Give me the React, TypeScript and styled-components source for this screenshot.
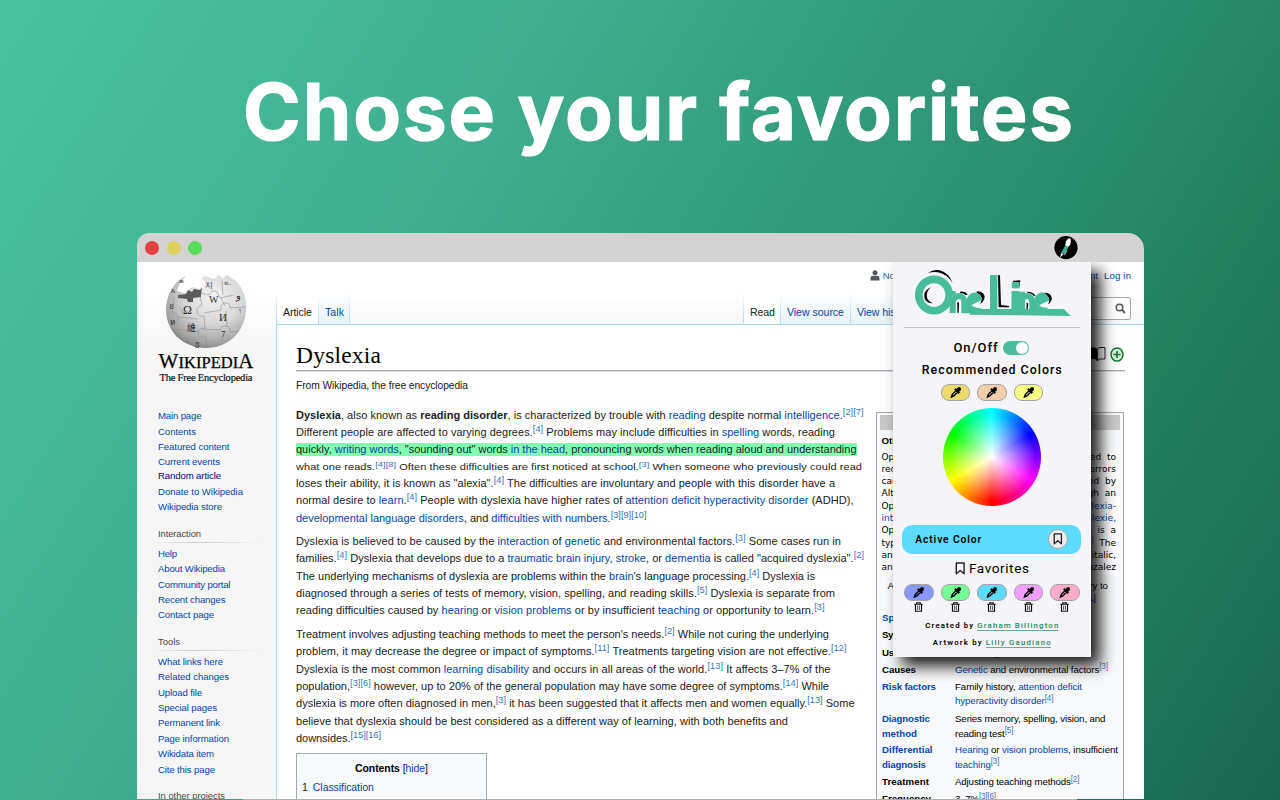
import React, { useLayoutEffect, useRef } from 'react';
import styled, { createGlobalStyle, css } from 'styled-components';

const Global = createGlobalStyle`
  * { box-sizing: border-box; }
  html, body { margin: 0; padding: 0; overflow: hidden; }
  body { font-family: "Liberation Sans", Arial, sans-serif; color: #202122; }
`;

/* ---------- text helpers ---------- */

const Run = styled.span<{ $squash?: boolean }>`
  display: inline-block;
  white-space: pre;
  ${p => p.$squash && css`transform: scaleY(0.76);`}
`;

const Link = styled.span<{ $visited?: boolean }>`
  color: ${p => (p.$visited ? '#0b0080' : '#0645ad')};
`;

const Sup = styled.span`
  color: #4470c0;
  font-size: 0.84em;
  font-weight: 400;
  line-height: 0;
  position: relative;
  top: -0.42em;
`;

const Strong = styled.b`
  font-weight: 700;
`;

const rich = (s: string) =>
  s.split(/(\{[^}]*\}|\^[^^]*\^|\*[^*]*\*)/).map((t, i) => {
    if (t[0] === '{') return <Link key={i}>{t.slice(1, -1)}</Link>;
    if (t[0] === '^') return <Sup key={i}>{t.slice(1, -1)}</Sup>;
    if (t[0] === '*') return <Strong key={i}>{t.slice(1, -1)}</Strong>;
    return t;
  });

/* Tracks a single line of text out (or in) to a given width. */
function Fit({ w, squash, children }: { w: number; squash?: boolean; children: React.ReactNode }) {
  const ref = useRef<HTMLSpanElement>(null);
  useLayoutEffect(() => {
    const el = ref.current!;
    el.style.letterSpacing = '0px';
    const natural = el.getBoundingClientRect().width;
    const n = Math.max(1, (el.textContent || '').length - 1);
    const ls = (w - natural) / n;
    el.style.letterSpacing = `${ls}px`;
    el.style.marginRight = `${-ls}px`;
  }, [w]);
  return <Run ref={ref} $squash={squash}>{children}</Run>;
}

/* ---------- page ---------- */

const Page = styled.div`
  width: 1280px;
  height: 800px;
  overflow: hidden;
  display: flex;
  flex-direction: column;
  background: linear-gradient(122deg, #48c4a0 0%, #3fae8e 32%, #2f9576 58%, #23805f 78%, #196650 100%);
`;

const Hero = styled.h1`
  margin: 0;
  height: 233px;
  padding: 61.5px 0 0 243px;
  font: 700 78px/100px Inter, "Open Sans", sans-serif;
  -webkit-text-stroke: 1.2px #fff;
  color: #fff;
`;

const Window = styled.div`
  position: relative;
  width: 1007px;
  height: 566px;
  margin-left: 137px;
  flex: none;
  display: flex;
  flex-direction: column;
`;

const Baseline = styled.div`
  height: 1px;
  width: 834px;
  margin-left: 243px;
  background: #b0b0b0;
`;

const TitleBar = styled.div`
  height: 29px;
  flex: none;
  background: #d3d3d3;
  border-radius: 12px 16px 0 0;
  display: flex;
  align-items: center;
  padding: 0 66px 0 8px;
  gap: 7.5px;
`;

const Light = styled.i<{ $c: string }>`
  width: 14px;
  height: 14px;
  border-radius: 50%;
  background: ${p => p.$c};
`;

const Spacer = styled.div`
  flex: 1;
`;

const Body = styled.div`
  flex: 1;
  min-height: 0;
  display: flex;
  overflow: hidden;
  background: #fff;
`;

/* ---------- sidebar ---------- */

const Sidebar = styled.div`
  width: 139px;
  flex: none;
  padding: 10.5px 0 0 21px;
  background: linear-gradient(#fff 32px, #f6f6f6 82px);
`;

const Brand = styled.div`
  width: 96px;
  height: 135.8px;
  display: flex;
  flex-direction: column;
  align-items: center;
`;

const Word = styled.div`
  font: 16.5px/18px "Liberation Serif", serif;
  color: #000;
  -webkit-text-stroke: 0.25px #000;
  margin-top: 1px;
`;

const Big = styled.span`
  font-size: 21px;
`;

const Motto = styled.div`
  font: 10.5px/12px "Liberation Serif", serif;
  color: #111;
  -webkit-text-stroke: 0.2px #111;
`;

const NavItem = styled.div<{ $h: number }>`
  height: ${p => p.$h}px;
  line-height: ${p => p.$h}px;
  font-size: 9.6px;
`;

const NavHead = styled.div`
  height: 17px;
  margin: 11.3px 12px 2.8px 0;
  font-size: 9.4px;
  line-height: 16px;
  color: #44484c;
  border-bottom: 1px solid;
  border-image: linear-gradient(90deg, #c8ccd133, #c8ccd1 33%, #c8ccd100) 1;
`;

type Nav = [string, number, number?];
const navMain: Nav[] = [
  ['Main page', 43.5], ['Contents', 38], ['Featured content', 71.5], ['Current events', 62, 15],
  ['Random article', 63, 14.4], ['Donate to Wikipedia', 85], ['Wikipedia store', 64],
];
const navInteract: Nav[] = [
  ['Help', 19], ['About Wikipedia', 67], ['Community portal', 72.5], ['Recent changes', 67.5], ['Contact page', 56],
];
const navTools: Nav[] = [
  ['What links here', 65], ['Related changes', 71], ['Upload file', 44], ['Special pages', 59],
  ['Permanent link', 62], ['Page information', 71], ['Wikidata item', 56], ['Cite this page', 57],
];

const NavList = ({ items }: { items: Nav[] }) => (
  <>
    {items.map(([t, w, h]) => (
      <NavItem key={t} $h={h ?? 15.4}>
        <Link $visited={t === 'Random article'}><Fit w={w}>{t}</Fit></Link>
      </NavItem>
    ))}
  </>
);

const Globe = () => (
  <svg width="84" height="78" viewBox="0 0 84 78">
    <defs>
      <radialGradient id="gl" cx="0.6" cy="0.3" r="0.75">
        <stop offset="0" stopColor="#f4f4f4" />
        <stop offset="0.5" stopColor="#d6d6d6" />
        <stop offset="0.85" stopColor="#a2a2a2" />
        <stop offset="1" stopColor="#777" />
      </radialGradient>
    </defs>
    <path d="M22 3 C19 6 16 9 14 15 L13 18 L21 20 L28 14 L38 16 L42 10 L38 6 L40 3 L45 4 L48 6 L52 5 L54 2 L59 5 L63 2 L66 4 C77 10 83 22 82 38 C80 60 64 75 42 75 C20 75 3 60 2 38 C2 22 10 8 22 3Z" fill="url(#gl)" />
    <path d="M14 22 L22 21 L24 17 L28 19 L30 16 L36 17 L38 14 L37 22 L37 24 L29 25 L29 29 L24 29 L23 26 L14 25Z" fill="#5c5c5c" />
    <path d="M19 42 q0 -6 -4 -8 M10 24 l-2 16 q6 0 6 5 t-7 5 l6 14 M36 24 l2 8 q-6 2 -5 7 t7 4 l1 12 q-7 0 -7 5 t8 4 l1 11 M14 44 l20 2 M40 40 l17 -3 q-1 -6 4 -7 t5 5 l15 -1 M38 56 l18 1 q1 -5 6 -4 t4 6 l9 -1 M37 20 l8 2 q3 -6 8 -3 l3 6 l14 -3 M58 8 l1 14 M57 25 l4 8 M62 38 l1 15 M13 56 l22 3 M60 60 l-3 12" fill="none" stroke="#8f8f8f" strokeWidth="0.6" />
    <g fill="#2b2b2b" fontFamily="Liberation Serif, DejaVu Serif, serif">
      <text x="19" y="41" fontSize="12">Ω</text>
      <text x="45" y="30" fontSize="10">W</text>
      <text x="55" y="48" fontSize="11">И</text>
      <text x="23" y="58" fontSize="9" fontFamily="Noto Sans CJK SC, sans-serif">維</text>
      <text x="41" y="15" fontSize="8">지</text>
      <text x="60" y="12" fontSize="8">உ</text>
      <text x="72" y="26" fontSize="10">و</text>
      <text x="57" y="64" fontSize="9">7</text>
      <text x="5" y="36" fontSize="8">ខ</text>
      <text x="6" y="52" fontSize="8">ห</text>
      <text x="7" y="20" fontSize="7">አ</text>
      <text x="15" y="10" fontSize="7">ж</text>
      <text x="75" y="40" fontSize="8">ו</text>
      <text x="31" y="73" fontSize="8">ვ</text>
    </g>
  </svg>
);

/* ---------- main column ---------- */

const Main = styled.div`
  flex: 1;
  min-width: 0;
  display: flex;
  flex-direction: column;
  border-left: 1px solid;
  border-image: linear-gradient(#fff 32px, #a7d7f9 60px) 1;
`;

const Head = styled.div`
  height: 63px;
  flex: none;
  background: linear-gradient(#fff 50%, #f6f6f6 100%);
  border-bottom: 1px solid #a7d7f9;
  display: flex;
  flex-direction: column;
`;

const Personal = styled.div`
  height: 27px;
  padding: 0 13px 0 593px;
  display: flex;
  align-items: center;
  font-size: 9.6px;
  color: #54595d;
`;

const PersonalLinks = styled.div`
  margin-left: auto;
  display: flex;
  gap: 6px;
`;

const Tabs = styled.div`
  height: 36px;
  padding: 5px 13px 0 0;
  display: flex;
`;

const Tab = styled.div<{ $w: number; $on?: boolean; $pad?: number }>`
  width: ${p => p.$w}px;
  height: 31px;
  padding: 3px 0 0 ${p => p.$pad ?? 6}px;
  line-height: 32px;
  font-size: 10.6px;
  color: ${p => (p.$on ? '#202122' : '#0645ad')};
  background: ${p => (p.$on ? '#fff' : 'linear-gradient(#fff, #e8f2f8)')};
  border-right: 1px solid;
  border-image: linear-gradient(#fff, #a7d7f9) 1;
  ${p => !p.$on && css`height: 30px;`}
`;

const SearchBox = styled.div`
  width: 120px;
  height: 22.5px;
  margin-top: 4px;
  background: #fff;
  border: 1.5px solid #a2a9b1;
  border-radius: 2px;
  display: flex;
  align-items: center;
  justify-content: flex-end;
  padding-right: 4px;
`;

const Content = styled.div`
  padding: 15px 19px 0 19px;
`;

const TitleRow = styled.div`
  height: 31px;
  border-bottom: 1px solid #a2a9b1;
  box-shadow: 0 1px 0 #a2a9b166;
  display: flex;
  justify-content: space-between;
  font: 23.5px/31px "Liberation Serif", serif;
  color: #000;
`;

const TitleIcons = styled.div`
  display: flex;
  gap: 4px;
  align-items: center;
  height: 28px;
  padding-right: 0.7px;
`;

const From = styled.div`
  margin-top: 6px;
  height: 16px;
  font-size: 10.3px;
  line-height: 17px;
`;

const Columns = styled.div`
  display: flex;
  align-items: flex-start;
  padding-top: 12.5px;
`;

const Article = styled.div`
  width: 580px;
  flex: none;
`;

const Para = styled.div`
  margin-bottom: 5.7px;
`;

const Line = styled.div<{ $h: number }>`
  height: ${p => p.$h}px;
  font-size: 11px;
  line-height: ${p => p.$h}px;
`;

const Mark = styled.span`
  display: inline-block;
  height: 12.5px;
  line-height: 12px;
  background: #83ffb0;
`;

const Toc = styled.div`
  width: 191px;
  height: 60px;
  border: 1px solid #a2a9b1;
  background: #f8f9fa;
  margin-top: 0.5px;
  padding: 4px 5px 0;
  font-size: 10.5px;
`;

const TocTitle = styled.div`
  height: 20px;
  line-height: 21px;
  text-align: center;
  color: #000;
`;

const TocItem = styled.div`
  height: 19px;
  line-height: 18px;
  display: flex;
  gap: 5px;
`;

const p1: [string, number, number?][] = [
  ['*Dyslexia*, also known as *reading disorder*, is characterized by trouble with {reading} despite normal {intelligence}.^[2][7]^', 567.5, 18.2],
  ['Different people are affected to varying degrees.^[4]^ Problems may include difficulties in {spelling} words, reading', 539, 17.7],
  ['quickly, {writing words}, "sounding out" words {in the head}, pronouncing words when reading aloud and understanding', 560.5, 17.2],
  ['what one reads.^[4][8]^ Often these difficulties are first noticed at school.^[3]^ When someone who previously could read', 566, 16.2],
  ['loses their ability, it is known as "alexia".^[4]^ The difficulties are involuntary and people with this disorder have a', 539, 17.5],
  ['normal desire to {learn}.^[4]^ People with dyslexia have higher rates of {attention deficit hyperactivity disorder} (ADHD),', 557.5],
  ['{developmental language disorders}, and {difficulties with numbers}.^[3][9][10]^', 350.5],
];
const p2: [string, number, number?][] = [
  ['Dyslexia is believed to be caused by the {interaction} of {genetic} and environmental factors.^[3]^ Some cases run in', 545],
  ['families.^[4]^ Dyslexia that develops due to a {traumatic brain injury}, {stroke}, or {dementia} is called "acquired dyslexia".^[2]^', 568],
  ["The underlying mechanisms of dyslexia are problems within the {brain}'s language processing.^[4]^ Dyslexia is", 519],
  ['diagnosed through a series of tests of memory, vision, spelling, and reading skills.^[5]^ Dyslexia is separate from', 539],
  ['reading difficulties caused by {hearing} or {vision problems} or by insufficient {teaching} or opportunity to learn.^[3]^', 528.5],
];
const p3: [string, number, number?][] = [
  ["Treatment involves adjusting teaching methods to meet the person's needs.^[2]^ While not curing the underlying", 533, 18],
  ['problem, it may decrease the degree or impact of symptoms.^[11]^ Treatments targeting vision are not effective.^[12]^', 550.5],
  ['Dyslexia is the most common {learning disability} and occurs in all areas of the world.^[13]^ It affects 3–7% of the', 534.5, 17.2],
  ['population,^[3][6]^ however, up to 20% of the general population may have some degree of symptoms.^[14]^ While', 533],
  ['dyslexia is more often diagnosed in men,^[3]^ it has been suggested that it affects men and women equally.^[13]^ Some', 558.5],
  ['believe that dyslexia should be best considered as a different way of learning, with both benefits and', 492, 17],
  ['downsides.^[15][16]^', 85],
];

const Paragraph = ({ lines, mark, squash }: { lines: [string, number, number?][]; mark?: number; squash?: number }) => (
  <Para>
    {lines.map(([t, w, h], i) => {
      const fit = <Fit w={w} squash={i === squash}>{rich(t)}</Fit>;
      return <Line key={i} $h={h ?? 17.4}>{i === mark ? <Mark>{fit}</Mark> : fit}</Line>;
    })}
  </Para>
);

/* ---------- infobox ---------- */

const Box = styled.div`
  width: 248px;
  height: 420px;
  margin-top: 6px;
  flex: none;
  border: 1.5px solid #a2a9b1;
  background: #f8f9fa;
  padding: 2px 3px 0 2.5px;
  font-size: 9.7px;
  color: #000;
`;

const BoxBar = styled.div`
  height: 15px;
  background: #c8c8c8;
`;

const BoxName = styled.div`
  height: 21px;
  padding-left: 2px;
  line-height: 21px;
  font-weight: 700;
`;

const Specimen = styled.div`
  height: 124px;
  background: #fff;
  padding: 0 4px 0 2px;
  font: 9px/12.3px "DejaVu Sans", sans-serif;
`;

const SpecLine = styled.div`
  height: 12.3px;
  display: flex;
  justify-content: space-between;
  word-spacing: 3px;
`;

const Caption = styled.div`
  height: 36.3px;
  padding: 5.5px 8px 0 8px;
  font-size: 9.7px;
  line-height: 11.5px;
`;

const CaptionLine = styled.div<{ $inset: number }>`
  display: flex;
  justify-content: space-between;
  padding-right: ${p => p.$inset}px;
`;

const Row = styled.div<{ $h: number }>`
  height: ${p => p.$h}px;
  padding-left: 2.5px;
  display: grid;
  grid-template-columns: 73px 1fr;
  line-height: 14.4px;
`;

const Label = styled.div<{ $link?: boolean }>`
  font-weight: 700;
  color: ${p => (p.$link ? '#0645ad' : '#000')};
`;

const spec: [string, string][] = [
  ['Opendyslexic', 'designed to'],
  ['reduce', 'errors'],
  ['caused', 'created by'],
  ['Although', 'through an'],
  ['Open', '{Dyslexia-}'],
  ['{interest}', '{Dyslexie,}'],
  ['Open', 'it is a'],
  ['type', '^[8]^ The'],
  ['and', 'italic,'],
  ['and', 'Gonzalez'],
];

type InfoRow = { h: number; link?: boolean; label: [string, number][]; value: [string, number][] };
const rows: InfoRow[] = [
  { h: 17.4, link: true, label: [['Specialty', 43]], value: [['{Neurology}', 46]] },
  { h: 17.4, label: [['Symptoms', 46]], value: [['Trouble {reading}', 72]] },
  { h: 17, label: [['Usual onset', 53]], value: [['School age', 50]] },
  { h: 17.4, label: [['Causes', 34]], value: [['{Genetic} and environmental factors^[3]^', 153]] },
  { h: 32.3, link: true, label: [['Risk factors', 54]], value: [['Family history, {attention deficit}', 127], ['{hyperactivity disorder}^[4]^', 98.5]] },
  { h: 31.2, link: true, label: [['Diagnostic', 48], ['method', 35]], value: [['Series memory, spelling, vision, and', 150.5], ['reading test^[5]^', 58.5]] },
  { h: 32, link: true, label: [['Differential', 50.5], ['diagnosis', 44]], value: [['{Hearing} or {vision problems}, insufficient', 163], ['{teaching}^[3]^', 44.5]] },
  { h: 17, label: [['Treatment', 47]], value: [['Adjusting teaching methods^[2]^', 124.5]] },
  { h: 17, label: [['Frequency', 49]], value: [['3–7%^[3][6]^', 41]] },
];

const Infobox = () => (
  <Box>
    <BoxBar />
    <BoxName>Other names</BoxName>
    <Specimen>
      {spec.map((words, i) => (
        <SpecLine key={i}>{words.map((w, j) => <span key={j}>{rich(w)}</span>)}</SpecLine>
      ))}
    </Specimen>
    <Caption>
      <CaptionLine $inset={4}><span>A typeface</span><span>to try to</span></CaptionLine>
      <CaptionLine $inset={16}><span /><Link>[1]</Link></CaptionLine>
    </Caption>
    {rows.map((r, i) => (
      <Row key={i} $h={r.h}>
        <Label $link={r.link}>{r.label.map(([t, w]) => <div key={t}><Fit w={w}>{t}</Fit></div>)}</Label>
        <div>{r.value.map(([t, w]) => <div key={t}><Fit w={w}>{rich(t)}</Fit></div>)}</div>
      </Row>
    ))}
  </Box>
);

/* ---------- popup ---------- */

/* Keeps the popup's shadow from falling on the title bar. */
const PopupLayer = styled.div`
  position: absolute;
  inset: 29px 0 0 0;
  overflow: hidden;
  pointer-events: none;
`;

const Popup = styled.div`
  position: absolute;
  left: 756px;
  top: 0;
  width: 197.5px;
  height: 395px;
  padding-top: 4.5px;
  background: #f5f4f8;
  box-shadow: 9px 9px 15px rgba(0, 0, 0, 0.9);
  font-family: Roboto, sans-serif;
  color: #000;
  display: flex;
  flex-direction: column;
  align-items: center;
`;

const Rule = styled.div`
  width: 176px;
  height: 1px;
  margin-top: 7px;
  background: #c3c3c6;
`;

const SwitchRow = styled.div`
  height: 16px;
  margin-top: 12px;
  padding-right: 1px;
  display: flex;
  align-items: center;
  gap: 5px;
  font-size: 13px;
  font-weight: 500;
`;

const Toggle = styled.div`
  width: 26.5px;
  height: 13.5px;
  border-radius: 7px;
  background: #4abb9b;
  display: flex;
  justify-content: flex-end;
  align-items: center;
  padding-right: 1px;
`;

const Knob = styled.i`
  width: 12px;
  height: 12px;
  border-radius: 50%;
  background: #fff;
`;

const Caps = styled.div<{ $size: number; $mt: number; $h: number; $weight?: number }>`
  height: ${p => p.$h}px;
  margin-top: ${p => p.$mt}px;
  font-size: ${p => p.$size}px;
  line-height: ${p => p.$h}px;
  font-weight: ${p => p.$weight ?? 500};
  display: flex;
  align-items: center;
  gap: 4px;
`;

const Pills = styled.div<{ $mt: number }>`
  display: flex;
  gap: 7px;
  margin-top: ${p => p.$mt}px;
`;

const Pill = styled.div<{ $c: string }>`
  width: 29.5px;
  height: 17px;
  border-radius: 8px;
  border: 1px solid #a5a3a5;
  background: ${p => p.$c};
  display: flex;
  align-items: center;
  justify-content: center;
`;

const Cell = styled.div`
  width: 29.5px;
  display: flex;
  justify-content: center;
`;

const Wheel = styled.div`
  width: 98px;
  height: 98px;
  flex: none;
  margin-top: 7px;
  border-radius: 50%;
  background:
    radial-gradient(circle closest-side, #fff 0%, rgba(255, 255, 255, 0) 88%),
    conic-gradient(#0ff, #00f 60deg, #f0f 120deg, #f00 180deg, #ff0 240deg, #0f0 300deg, #0ff);
`;

const Active = styled.div`
  width: 179px;
  height: 29px;
  margin-top: 19px;
  padding: 0 13px;
  border-radius: 10px;
  background: #5ddbff;
  display: flex;
  align-items: center;
  justify-content: space-between;
  font-size: 10.3px;
  font-weight: 600;
`;

const Round = styled.div`
  width: 20px;
  height: 20px;
  border-radius: 50%;
  border: 1px solid #9aa;
  background: #ececee;
  display: flex;
  align-items: center;
  justify-content: center;
`;

const Author = styled.span`
  height: 10px;
  line-height: 10px;
  color: #2a8466;
  font-weight: 500;
  border-bottom: 1px solid #2a8466aa;
`;

const Dropper = () => (
  <svg width="11" height="11" viewBox="0 0 22 22">
    <path d="M3.500 19 L4.500 15 L12 7.500 L15 10.500 L7.500 18 Z" fill="none" stroke="#000" strokeWidth="2.800" strokeLinejoin="round" />
    <path d="M9 5 L11.500 3 L13 4.500 L15.500 1.800 Q18.500 -0.200 20.800 1.500 Q22.600 4 20.500 6.800 L17.800 9.500 L19.300 11 L17 13.500 Z" fill="#000" stroke="#000" strokeWidth="1.200" />
    <path d="M1.200 21.500 L3.500 17.500 L5.500 19.500Z" fill="#000" stroke="#000" />
  </svg>
);

const Bookmark = ({ s }: { s: number }) => (
  <svg width={s * 0.8} height={s} viewBox="0 0 16 20">
    <path d="M2 1.500 H14 V18 L8 13 L2 18 Z" fill="none" stroke="#222" strokeWidth="2.200" strokeLinejoin="round" />
  </svg>
);

const Trash = () => (
  <svg width="9" height="10" viewBox="0 0 18 20">
    <path d="M0.500 4.500 H17.500 M5.500 4 V1.500 H12.500 V4 M3 5 V18.500 H15 V5" fill="none" stroke="#111" strokeWidth="2.400" />
    <path d="M7.200 7 V16 M10.800 7 V16" fill="none" stroke="#222" strokeWidth="1.500" />
  </svg>
);

const OneLineLogo = () => (
  <svg width="166.667" height="53.333" viewBox="55 20 500 160">
    <g fill="#000">
      <path d="M115 38 Q130 27 150 30 Q178 38 189 68 Q170 40 145 36 Q130 34 115 38Z" />
      <path d="M124 80 Q100 92 104 112 Q110 130 130 129 Q112 122 111 106 Q111 92 124 80Z" />
      <path d="M211 94 Q228 92 234 104 L228 104 Q222 98 211 98Z" />
      <path d="M261 93 Q288 94 284 115 Q280 126 272 130 Q284 108 261 97Z" />
      <path d="M325 45 L331 45 L334 134 L358 137 L358 141 L327 141Z" />
      <path d="M368 66 L372 61 L392 60 L389 82 L386 68Z" />
      <path d="M413 94 Q432 94 438 108 L432 106 Q426 98 413 98Z" />
      <path d="M462 97 Q488 96 486 118 Q482 128 476 132 Q484 108 462 101Z" />
    </g>
    <g fill="none" stroke="#48bd9c" strokeWidth="18">
      <ellipse cx="133" cy="104" rx="45.500" ry="47" strokeWidth="23" />
      <path d="M189 92 V158 M190 118 Q202 104 214 108 Q224 112 224 130 V150 H250" />
      <path d="M236 130 L268 114 Q262 100 248 107 Q232 118 240 138 Q246 150 274 152" strokeWidth="16" />
      <path d="M312 44 V148" strokeWidth="22" />
      <path d="M377 92 V158" strokeWidth="23" />
      <path d="M378 65 V84" strokeWidth="23" />
      <path d="M397 94 V158 M396 118 Q406 104 418 108 Q428 112 428 130 V150 H450" />
      <path d="M440 130 L470 116 Q464 100 450 107 Q434 118 442 138 Q448 150 474 150" strokeWidth="16" />
    </g>
    <g fill="#000">
      <path d="M203 124 L208 128 L207 157 L203 157Z M411 126 L416 130 L413 155 L410 155Z" />
    </g>
    <path d="M240 146 H523 L543 167 L240 163Z M366 146 H412 V164 H366Z" fill="#48bd9c" />
  </svg>
);

const PenBadge = () => (
  <svg width="24" height="24" viewBox="0 0 24 24">
    <circle cx="12" cy="11.600" r="11.600" fill="#000" />
    <path d="M12 5.500 Q14 1.500 16.500 2.500 Q17.500 5 16.200 9 L14 11 L11.200 9.500Z" fill="#fff" />
    <path d="M11 9.800 L14.500 11.300 L10.500 18 L7.200 17Z" fill="#35b597" />
    <path d="M7.200 17 L9.500 18.200 L6 21.500Z" fill="#fff" />
    <path d="M13 14.500 L10.500 18.800" stroke="#ddd" strokeWidth="0.900" />
  </svg>
);

const OneLinePopup = () => (
  <Popup>
    <OneLineLogo />
    <Rule />
    <SwitchRow><Fit w={44}>On/Off</Fit><Toggle><Knob /></Toggle></SwitchRow>
    <Caps $size={12.4} $mt={6} $h={16}><Fit w={140}>Recommended Colors</Fit></Caps>
    <Pills $mt={6}>
      {['#ecda6c', '#efceac', '#faff85'].map(c => <Pill key={c} $c={c}><Dropper /></Pill>)}
    </Pills>
    <Wheel />
    <Active><Fit w={66}>Active Color</Fit><Round><Bookmark s={12} /></Round></Active>
    <Caps $size={13.6} $mt={6} $h={17} $weight={400}><Bookmark s={13} /><Fit w={60}>Favorites</Fit></Caps>
    <Pills $mt={7}>
      {['#8798ff', '#76ff97', '#5ddbff', '#f2a0ff', '#ffabc9'].map(c => <Pill key={c} $c={c}><Dropper /></Pill>)}
    </Pills>
    <Pills $mt={1.5}>
      {[0, 1, 2, 3, 4].map(i => <Cell key={i}><Trash /></Cell>)}
    </Pills>
    <Caps $size={7.8} $mt={8} $h={12} $weight={600}><Fit w={48}>Created by</Fit><Author><Fit w={81}>Graham Billington</Fit></Author></Caps>
    <Caps $size={7.8} $mt={4.5} $h={12} $weight={600}><Fit w={49}>Artwork by</Fit><Author><Fit w={65}>Lilly Gaudiano</Fit></Author></Caps>
  </Popup>
);

export default function App() {
  return (
    <>
      <Global />
      <Page>
        <Hero><Fit w={830}>Chose your favorites</Fit></Hero>
        <Window>
          <TitleBar>
            <Light $c="#e54141" /><Light $c="#dcd060" /><Light $c="#57de5a" />
            <Spacer />
            <PenBadge />
          </TitleBar>
          <Body>
            <Sidebar>
              <Brand>
                <Globe />
                <Word><Fit w={95}><Big>W</Big>IKIPEDI<Big>A</Big></Fit></Word>
                <Motto><Fit w={93}>The Free Encyclopedia</Fit></Motto>
              </Brand>
              <NavList items={navMain} />
              <NavHead><Fit w={43}>Interaction</Fit></NavHead>
              <NavList items={navInteract} />
              <NavHead><Fit w={22}>Tools</Fit></NavHead>
              <NavList items={navTools} />
              <NavHead><Fit w={67}>In other projects</Fit></NavHead>
            </Sidebar>
            <Main>
              <Head>
                <Personal>
                  <svg width="10" height="11" viewBox="0 0 20 22"><circle cx="10" cy="5.500" r="5" fill="#54595d" /><path d="M1 21 V16 Q1 11.500 6 11.500 H14 Q19 11.500 19 16 V21Z" fill="#54595d" /></svg>
                  <Run>&nbsp;Not logged in</Run>
                  <PersonalLinks>
                    <Link><Fit w={66}>Create account</Fit></Link>
                    <Link><Fit w={27}>Log in</Fit></Link>
                  </PersonalLinks>
                </Personal>
                <Tabs>
                  <Tab $w={42} $on><Fit w={29}>Article</Fit></Tab>
                  <Tab $w={31}><Fit w={19}>Talk</Fit></Tab>
                  <Spacer />
                  <Tab $w={1} $pad={0} />
                  <Tab $w={37} $on><Fit w={25}>Read</Fit></Tab>
                  <Tab $w={70}><Fit w={57}>View source</Fit></Tab>
                  <Tab $w={70}><Fit w={56}>View history</Fit></Tab>
                  <Tab $w={90} $pad={7} />
                  <SearchBox>
                    <svg width="11" height="11" viewBox="0 0 22 22"><circle cx="9" cy="9" r="6.500" fill="none" stroke="#54595d" strokeWidth="3" /><path d="M13.500 13.500 L20 20" stroke="#54595d" strokeWidth="3.600" /></svg>
                  </SearchBox>
                </Tabs>
              </Head>
              <Content>
                <TitleRow>
                  <Fit w={85}>Dyslexia</Fit>
                  <TitleIcons>
                    <svg width="18" height="16" viewBox="0 0 18 16"><path d="M1 1.500 H6 Q9 1.500 9 3.500 V15 Q8 13 6 13 H1Z" fill="#000" /><path d="M17 1.500 H12 Q9.500 1.500 9.500 3.500 V15 Q10 13 12 13 H17Z" fill="#fff" stroke="#111" strokeWidth="0.900" /></svg>
                    <svg width="14" height="15" viewBox="0 0 14 15"><ellipse cx="7" cy="7.500" rx="6" ry="6.600" fill="#d9f3dc" stroke="#127a2e" strokeWidth="1.500" /><path d="M7 4 V11 M3.500 7.500 H10.500" stroke="#127a2e" strokeWidth="1.700" /></svg>
                  </TitleIcons>
                </TitleRow>
                <From><Fit w={172}>From Wikipedia, the free encyclopedia</Fit></From>
                <Columns>
                  <Article>
                    <Paragraph lines={p1} mark={2} squash={3} />
                    <Paragraph lines={p2} />
                    <Paragraph lines={p3} />
                    <Toc>
                      <TocTitle><Fit w={73}><Strong>Contents</Strong> [<Link>hide</Link>]</Fit></TocTitle>
                      <TocItem><span>1</span><Link><Fit w={61}>Classification</Fit></Link></TocItem>
                    </Toc>
                  </Article>
                  <Infobox />
                </Columns>
              </Content>
            </Main>
          </Body>
          <PopupLayer>
            <OneLinePopup />
          </PopupLayer>
        </Window>
        <Baseline />
      </Page>
    </>
  );
}
